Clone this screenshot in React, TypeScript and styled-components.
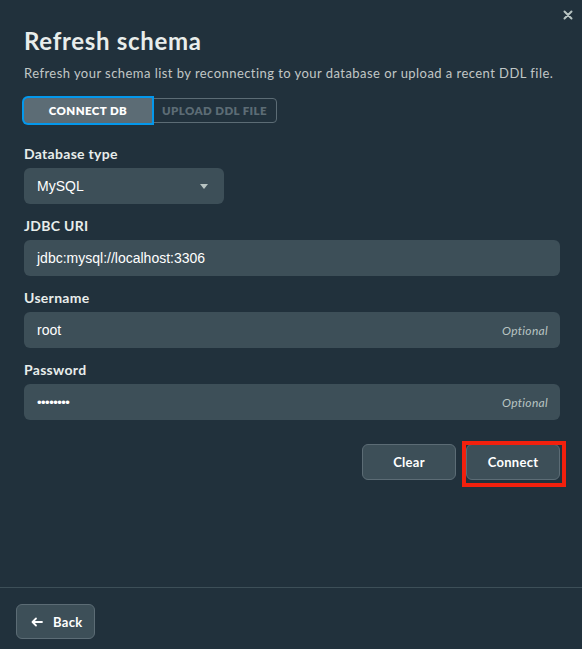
import React from 'react';
import styled, { createGlobalStyle } from 'styled-components';

const GlobalStyle = createGlobalStyle`
  html, body {
    margin: 0;
    padding: 0;
    background: #21313c;
  }
  * {
    box-sizing: border-box;
  }
`;

const Modal = styled.div`
  width: 582px;
  height: 649px;
  background: #21313c;
  display: flex;
  flex-direction: column;
  position: relative;
  font-family: Lato, 'Open Sans', sans-serif;
  color: #e8edeb;
`;

const CloseButton = styled.button`
  position: absolute;
  top: 8px;
  right: 7px;
  width: 14px;
  height: 14px;
  padding: 0;
  border: none;
  background: transparent;
  display: flex;
  align-items: center;
  justify-content: center;
`;

const Body = styled.div`
  flex: 1;
  padding: 26px 22px 0 24px;
  display: flex;
  flex-direction: column;
`;

const Title = styled.h1`
  margin: 0;
  font-size: 24px;
  font-weight: 700;
  line-height: 30px;
  color: #e8edeb;
  letter-spacing: 0.7px;
`;

const Subtitle = styled.p`
  margin: 8px 0 0;
  font-size: 13px;
  line-height: 18px;
  color: #c1c7c6;
  letter-spacing: 0.45px;
`;

const Tabs = styled.div`
  margin-top: 16px;
  display: flex;
`;

const Tab = styled.button<{ $active?: boolean }>`
  height: 25px;
  padding: 0;
  font-family: inherit;
  font-size: 11.5px;
  font-weight: 800;
  letter-spacing: 0.4px;
  white-space: nowrap;
  text-transform: uppercase;
  border: 1px solid #5c6c75;
  background: ${(p) => (p.$active ? '#5c6c75' : 'transparent')};
  color: ${(p) => (p.$active ? '#ffffff' : '#5c6c75')};
  border-radius: ${(p) => (p.$active ? '4px 0 0 4px' : '0 4px 4px 0')};
  box-shadow: ${(p) => (p.$active ? '0 0 0 2px #0498ec' : 'none')};
  position: ${(p) => (p.$active ? 'relative' : 'static')};
  z-index: ${(p) => (p.$active ? 1 : 0)};
  width: ${(p) => (p.$active ? '128px' : '125px')};
`;

const Form = styled.div`
  margin-top: 21px;
  display: flex;
  flex-direction: column;
  gap: 12px;
`;

const Field = styled.div`
  display: flex;
  flex-direction: column;
  gap: 4px;
`;

const Label = styled.label`
  font-size: 14px;
  font-weight: 700;
  line-height: 20px;
  color: #e8edeb;
  letter-spacing: 0.3px;
`;

const InputBox = styled.div<{ $width?: string }>`
  width: ${(p) => p.$width || '536px'};
  height: 36px;
  border-radius: 6px;
  background: #3d4f58;
  display: flex;
  align-items: center;
  justify-content: space-between;
  padding: 0 12px 0 13px;
  font-family: 'Liberation Sans', Arial, sans-serif;
  font-size: 14px;
  color: #ffffff;
`;

const Value = styled.span``;

const Dots = styled.span`
  font-size: 13px;
  letter-spacing: -0.5px;
`;

const Optional = styled.span`
  font-family: Lato, 'Open Sans', sans-serif;
  font-style: italic;
  font-size: 12px;
  letter-spacing: 0.3px;
  color: #b8c4c2;
`;

const Caret = styled.span`
  width: 0;
  height: 0;
  border-left: 4.5px solid transparent;
  border-right: 4.5px solid transparent;
  border-top: 5px solid #b8c4c2;
  margin-right: 4px;
`;

const Actions = styled.div`
  margin-top: 24px;
  display: flex;
  justify-content: flex-end;
  gap: 10px;
`;

const Button = styled.button`
  width: 94px;
  height: 36px;
  border-radius: 6px;
  border: 1px solid #5c6c75;
  background: #3d4f58;
  color: #ffffff;
  font-family: inherit;
  font-size: 13px;
  font-weight: 700;
  letter-spacing: 0.3px;
  position: relative;
`;

const Highlight = styled.span`
  position: absolute;
  left: -5px;
  top: -4px;
  right: -7px;
  bottom: -8px;
  border: 4px solid #f2200d;
  pointer-events: none;
`;

const Footer = styled.div`
  border-top: 1px solid #3d4f58;
  padding: 16px 16px 10px;
  height: 62px;
`;

const BackButton = styled.button`
  height: 35px;
  padding: 0 12px 0 14px;
  border-radius: 6px;
  border: 1px solid #5c6c75;
  background: #3d4f58;
  color: #ffffff;
  font-family: inherit;
  font-size: 13px;
  font-weight: 700;
  letter-spacing: 0.3px;
  display: flex;
  align-items: center;
  gap: 10px;
`;

export default function App() {
  return (
    <>
      <GlobalStyle />
      <Modal>
        <CloseButton aria-label="Close">
          <svg width="10" height="10" viewBox="0 0 10 10">
            <path d="M1.5 1.5 L8.5 8.5 M8.5 1.5 L1.5 8.5" stroke="#b8c4c2" strokeWidth="2" strokeLinecap="round" />
          </svg>
        </CloseButton>
        <Body>
          <Title>Refresh schema</Title>
          <Subtitle>
            Refresh your schema list by reconnecting to your database or upload a recent DDL file.
          </Subtitle>
          <Tabs>
            <Tab $active>Connect DB</Tab>
            <Tab>Upload DDL File</Tab>
          </Tabs>
          <Form>
            <Field>
              <Label>Database type</Label>
              <InputBox $width="200px">
                <Value>MySQL</Value>
                <Caret />
              </InputBox>
            </Field>
            <Field>
              <Label>JDBC URI</Label>
              <InputBox>
                <Value>jdbc:mysql://localhost:3306</Value>
              </InputBox>
            </Field>
            <Field>
              <Label>Username</Label>
              <InputBox>
                <Value>root</Value>
                <Optional>Optional</Optional>
              </InputBox>
            </Field>
            <Field>
              <Label>Password</Label>
              <InputBox>
                <Dots>••••••••</Dots>
                <Optional>Optional</Optional>
              </InputBox>
            </Field>
          </Form>
          <Actions>
            <Button>Clear</Button>
            <Button>
              Connect
              <Highlight />
            </Button>
          </Actions>
        </Body>
        <Footer>
          <BackButton>
            <svg width="12" height="10" viewBox="0 0 12 10">
              <path d="M11 5 H1.8 M5 1.5 L1.5 5 L5 8.5" stroke="#ffffff" strokeWidth="1.8" fill="none" strokeLinecap="round" strokeLinejoin="round" />
            </svg>
            Back
          </BackButton>
        </Footer>
      </Modal>
    </>
  );
}
